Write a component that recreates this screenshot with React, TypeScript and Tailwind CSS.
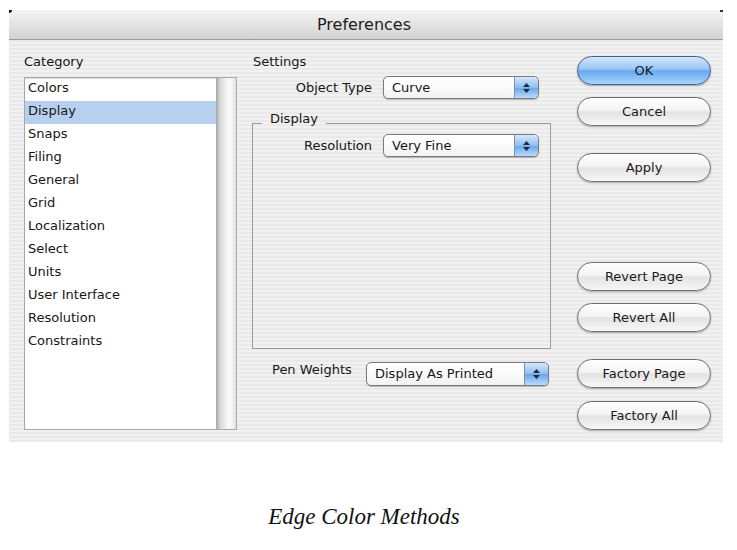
const categories = [
  "Colors",
  "Display",
  "Snaps",
  "Filing",
  "General",
  "Grid",
  "Localization",
  "Select",
  "Units",
  "User Interface",
  "Resolution",
  "Constraints"
];

const ui = "font-['DejaVu_Sans',sans-serif] text-[13px] text-[#161616]";

function Stepper() {
  return (
    <span className="flex h-full w-[24px] flex-col items-center justify-center gap-[2px] rounded-r-[4px] border-l border-[#7f8fa8] bg-[linear-gradient(#d6e8fb,#8fbdf0_50%,#6aa5ea_52%,#b9dcfb)]">
      <svg width="7" height="4" viewBox="0 0 7 4">
        <path d="M3.5 0 L7 4 L0 4 Z" fill="#1d2b45" />
      </svg>
      <svg width="7" height="4" viewBox="0 0 7 4">
        <path d="M0 0 L7 0 L3.5 4 Z" fill="#1d2b45" />
      </svg>
    </span>
  );
}

function Popup({ value, className }: { value: string; className: string }) {
  return (
    <div
      className={`flex items-center overflow-hidden rounded-[5px] border border-[#7a7a7a] bg-[linear-gradient(#ffffff,#fbfbfb_50%,#f1f1f1)] shadow-[0_1px_1px_rgba(0,0,0,0.25)] ${className}`}
    >
      <span className="flex-1 truncate pl-[8px] leading-[16px]">{value}</span>
      <Stepper />
    </div>
  );
}

function AquaButton({ label, primary, className }: { label: string; primary?: boolean; className: string }) {
  return (
    <button
      className={`flex h-[29px] w-[134px] items-center justify-center rounded-full border shadow-[0_1px_2px_rgba(0,0,0,0.3)] ${
        primary
          ? "border-[#40608f] bg-[linear-gradient(#d3e6fb,#97c5f5_45%,#6aa8ef_52%,#a6d6fd)]"
          : "border-[#6f6f6f] bg-[linear-gradient(#ffffff,#f4f4f4_45%,#e3e3e3_52%,#f7f7f7)]"
      } ${className}`}
    >
      <span className="leading-[16px] text-[#1a1a1a]">{label}</span>
    </button>
  );
}

export default function App() {
  return (
    <div className={`min-h-[550px] w-[737px] bg-white ${ui}`}>
      <div className="relative ml-[9px] pt-[10px]">
        <div className="flex h-[432px] w-[714px] flex-col bg-[repeating-linear-gradient(#f1f1f1_0px,#f1f1f1_2px,#e9e9e9_2px,#e9e9e9_4px)]">
          {/* title bar */}
          <div className="flex h-[30px] items-center justify-center border-b border-[#9c9c9c] bg-[linear-gradient(#f4f4f4,#e4e4e4_50%,#d2d2d2)] pr-[4px]">
            <span className="text-[16px] leading-[18px] text-[#1c1c1c]">Preferences</span>
          </div>

          <div className="flex flex-1 pl-[15px]">
            {/* category column */}
            <div className="flex w-[213px] flex-col pt-[14px]">
              <div className="h-[16px] leading-[16px]">Category</div>
              <div className="mt-[7px] flex h-[353px] border border-[#a8a8a8] bg-white shadow-[inset_0_1px_1px_rgba(0,0,0,0.15)]">
                <ul className="flex-1">
                  {categories.map((c) => (
                    <li
                      key={c}
                      className={`flex h-[23px] items-center pb-[3px] pl-[3px] leading-[16px] ${
                        c === "Display" ? "bg-[#b8d0f0]" : ""
                      }`}
                    >
                      {c}
                    </li>
                  ))}
                </ul>
                <div className="w-[20px] bg-[linear-gradient(to_right,#a4a4a4,#d6d6d6_20%,#f6f6f6_55%,#fafafa_70%,#e2e2e2)]" />
              </div>
            </div>

            {/* settings column */}
            <div className="ml-[15px] flex w-[299px] flex-col pt-[14px]">
              <div className="h-[16px] pl-[1px] leading-[16px]">Settings</div>
              <div className="mt-[6px] flex items-center">
                <span className="w-[121px] pr-[1px] text-right leading-[16px]">Object Type</span>
                <Popup value="Curve" className="ml-[10px] h-[23px] w-[156px]" />
              </div>

              <fieldset className="mt-[12px] h-[238px] border border-[#9a9a9a]">
                <legend className="ml-[9px] px-[8px] pb-[8px] leading-[16px]">Display</legend>
                <div className="-mt-[1px] flex items-center">
                  <span className="w-[120px] pr-[1px] text-right leading-[16px]">Resolution</span>
                  <Popup value="Very Fine" className="ml-[10px] h-[23px] w-[156px]" />
                </div>
              </fieldset>

              <div className="mt-[13px] flex items-start">
                <span className="w-[114px] pl-[20px] leading-[16px]">Pen Weights</span>
                <Popup value="Display As Printed" className="h-[24px] w-[183px]" />
              </div>
            </div>

            {/* buttons */}
            <div className="ml-[26px] flex flex-col">
              <AquaButton label="OK" primary className="mt-[16px]" />
              <AquaButton label="Cancel" className="mt-[12px]" />
              <AquaButton label="Apply" className="mt-[27px]" />
              <AquaButton label="Revert Page" className="mt-[80px]" />
              <AquaButton label="Revert All" className="mt-[12px]" />
              <AquaButton label="Factory Page" className="mt-[27px]" />
              <AquaButton label="Factory All" className="mt-[13px]" />
            </div>
          </div>
        </div>

        {/* corner marks */}
        <span className="absolute left-0 top-[10px] h-[3px] w-[3px] rounded-br-[3px] bg-[#111]" />
        <span className="absolute left-[711px] top-[10px] h-[2px] w-[3px] bg-[#333]" />
      </div>

      <p className="ml-[9px] mt-[61px] w-[714px] pr-[4px] text-center font-['Liberation_Serif',serif] text-[23px] italic leading-[28px] text-[#111]">
        Edge Color Methods
      </p>
    </div>
  );
}
